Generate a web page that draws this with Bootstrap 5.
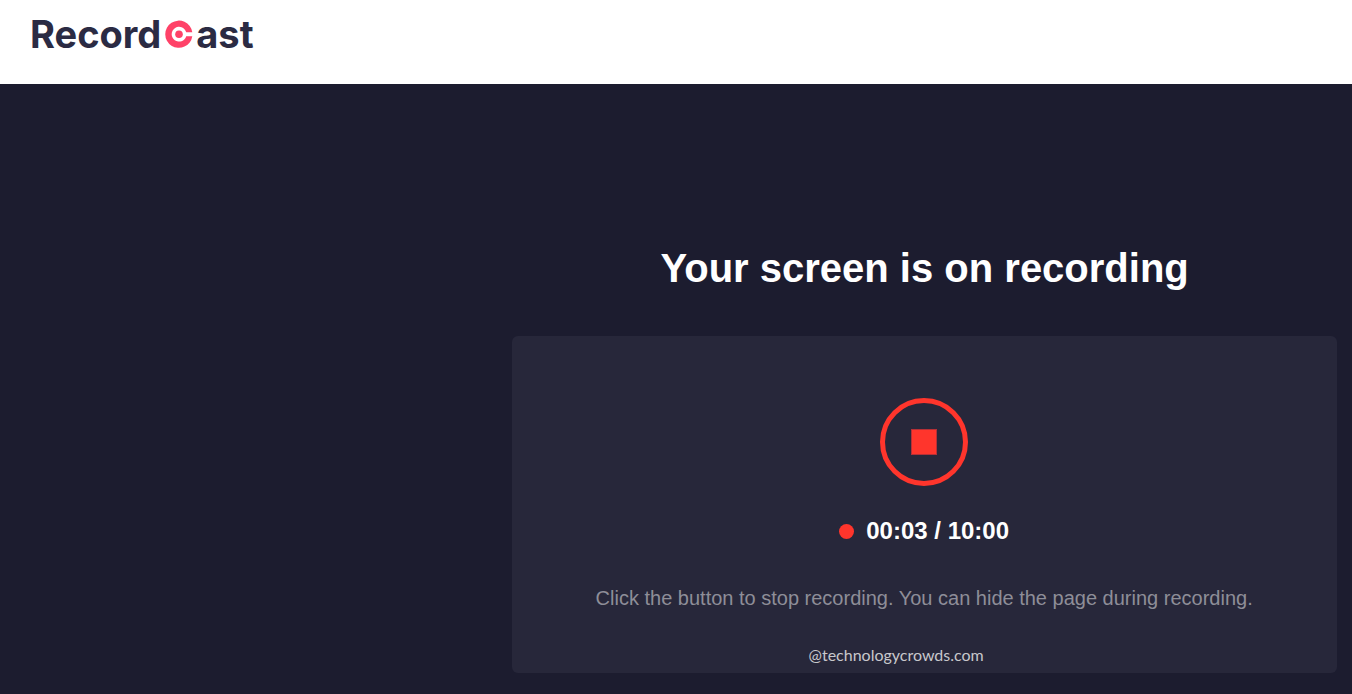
<!DOCTYPE html>
<html lang="en">
<head>
<meta charset="utf-8">
<meta name="viewport" content="width=device-width, initial-scale=1">
<title>RecordCast</title>
<link href="https://cdn.jsdelivr.net/npm/bootstrap@5.3.0/dist/css/bootstrap.min.css" rel="stylesheet">
<style>
  body { background: #1c1c2f; font-family: "Liberation Sans", Arial, sans-serif; }
  .site-header { height: 84px; padding: 12px 30px; }
  .brand { font: 700 38px/44px Inter, sans-serif; color: #2b2b43; }
  .brand svg { width: 28px; height: 28px; margin: 0 3px 0 4px; }
  .recorder { width: 61%; margin: 156px 15px 20px auto; }
  .recorder-title { font-size: 40px; line-height: 56px; margin-bottom: 40px; }
  .panel { background: #27273a; border-radius: 6px; padding: 62px 17px 6px 16px; }
  .stop-btn { width: 88px; height: 88px; border: 5px solid #ff352c; background: none; }
  .stop-btn svg { width: 26px; height: 26px; }
  .timer { font-size: 24px; line-height: 36px; margin-top: 27px; gap: 12px; }
  .rec-dot { width: 15px; height: 15px; background: #ff352c; }
  .hint { font-size: 20px; line-height: 30px; color: #8e8e98; margin-top: 34px; }
  .credit { font: 16px/24px Lato, sans-serif; color: #c8c8cc; margin-top: 30px; padding-right: 56px; }
</style>
</head>
<body>
<header class="site-header bg-white">
  <a class="brand d-inline-flex align-items-center text-decoration-none" href="#" aria-label="RecordCast">
    <span>Record</span>
    <svg viewBox="0 0 28 28" aria-hidden="true">
      <path d="M27.3 16.2A13.6 13.6 0 1 1 27.3 12.2H21.2A7.4 7.4 0 1 0 21.2 16.2Z" fill="#ff4268"/>
      <circle cx="14" cy="14.2" r="3.8" fill="#ff4268"/>
    </svg>
    <span>ast</span>
  </a>
</header>
<main class="recorder text-center text-white">
  <h1 class="recorder-title fw-bold">Your screen is on recording</h1>
  <section class="panel">
    <button type="button" class="stop-btn rounded-circle p-0 d-inline-flex align-items-center justify-content-center align-top" aria-label="Stop recording">
      <svg viewBox="0 0 26 26" aria-hidden="true"><rect width="26" height="26" fill="#b53036"/><rect x="1" y="1" width="24" height="24" fill="#ff352c"/></svg>
    </button>
    <div class="timer fw-bold d-flex align-items-center justify-content-center">
      <span class="rec-dot rounded-circle"></span>
      <span>00:03 / 10:00</span>
    </div>
    <p class="hint mb-0">Click the button to stop recording. You can hide the page during recording.</p>
    <p class="credit mb-0">@technologycrowds.com</p>
  </section>
</main>
<script src="https://cdn.jsdelivr.net/npm/bootstrap@5.3.0/dist/js/bootstrap.bundle.min.js"></script>
</body>
</html>
